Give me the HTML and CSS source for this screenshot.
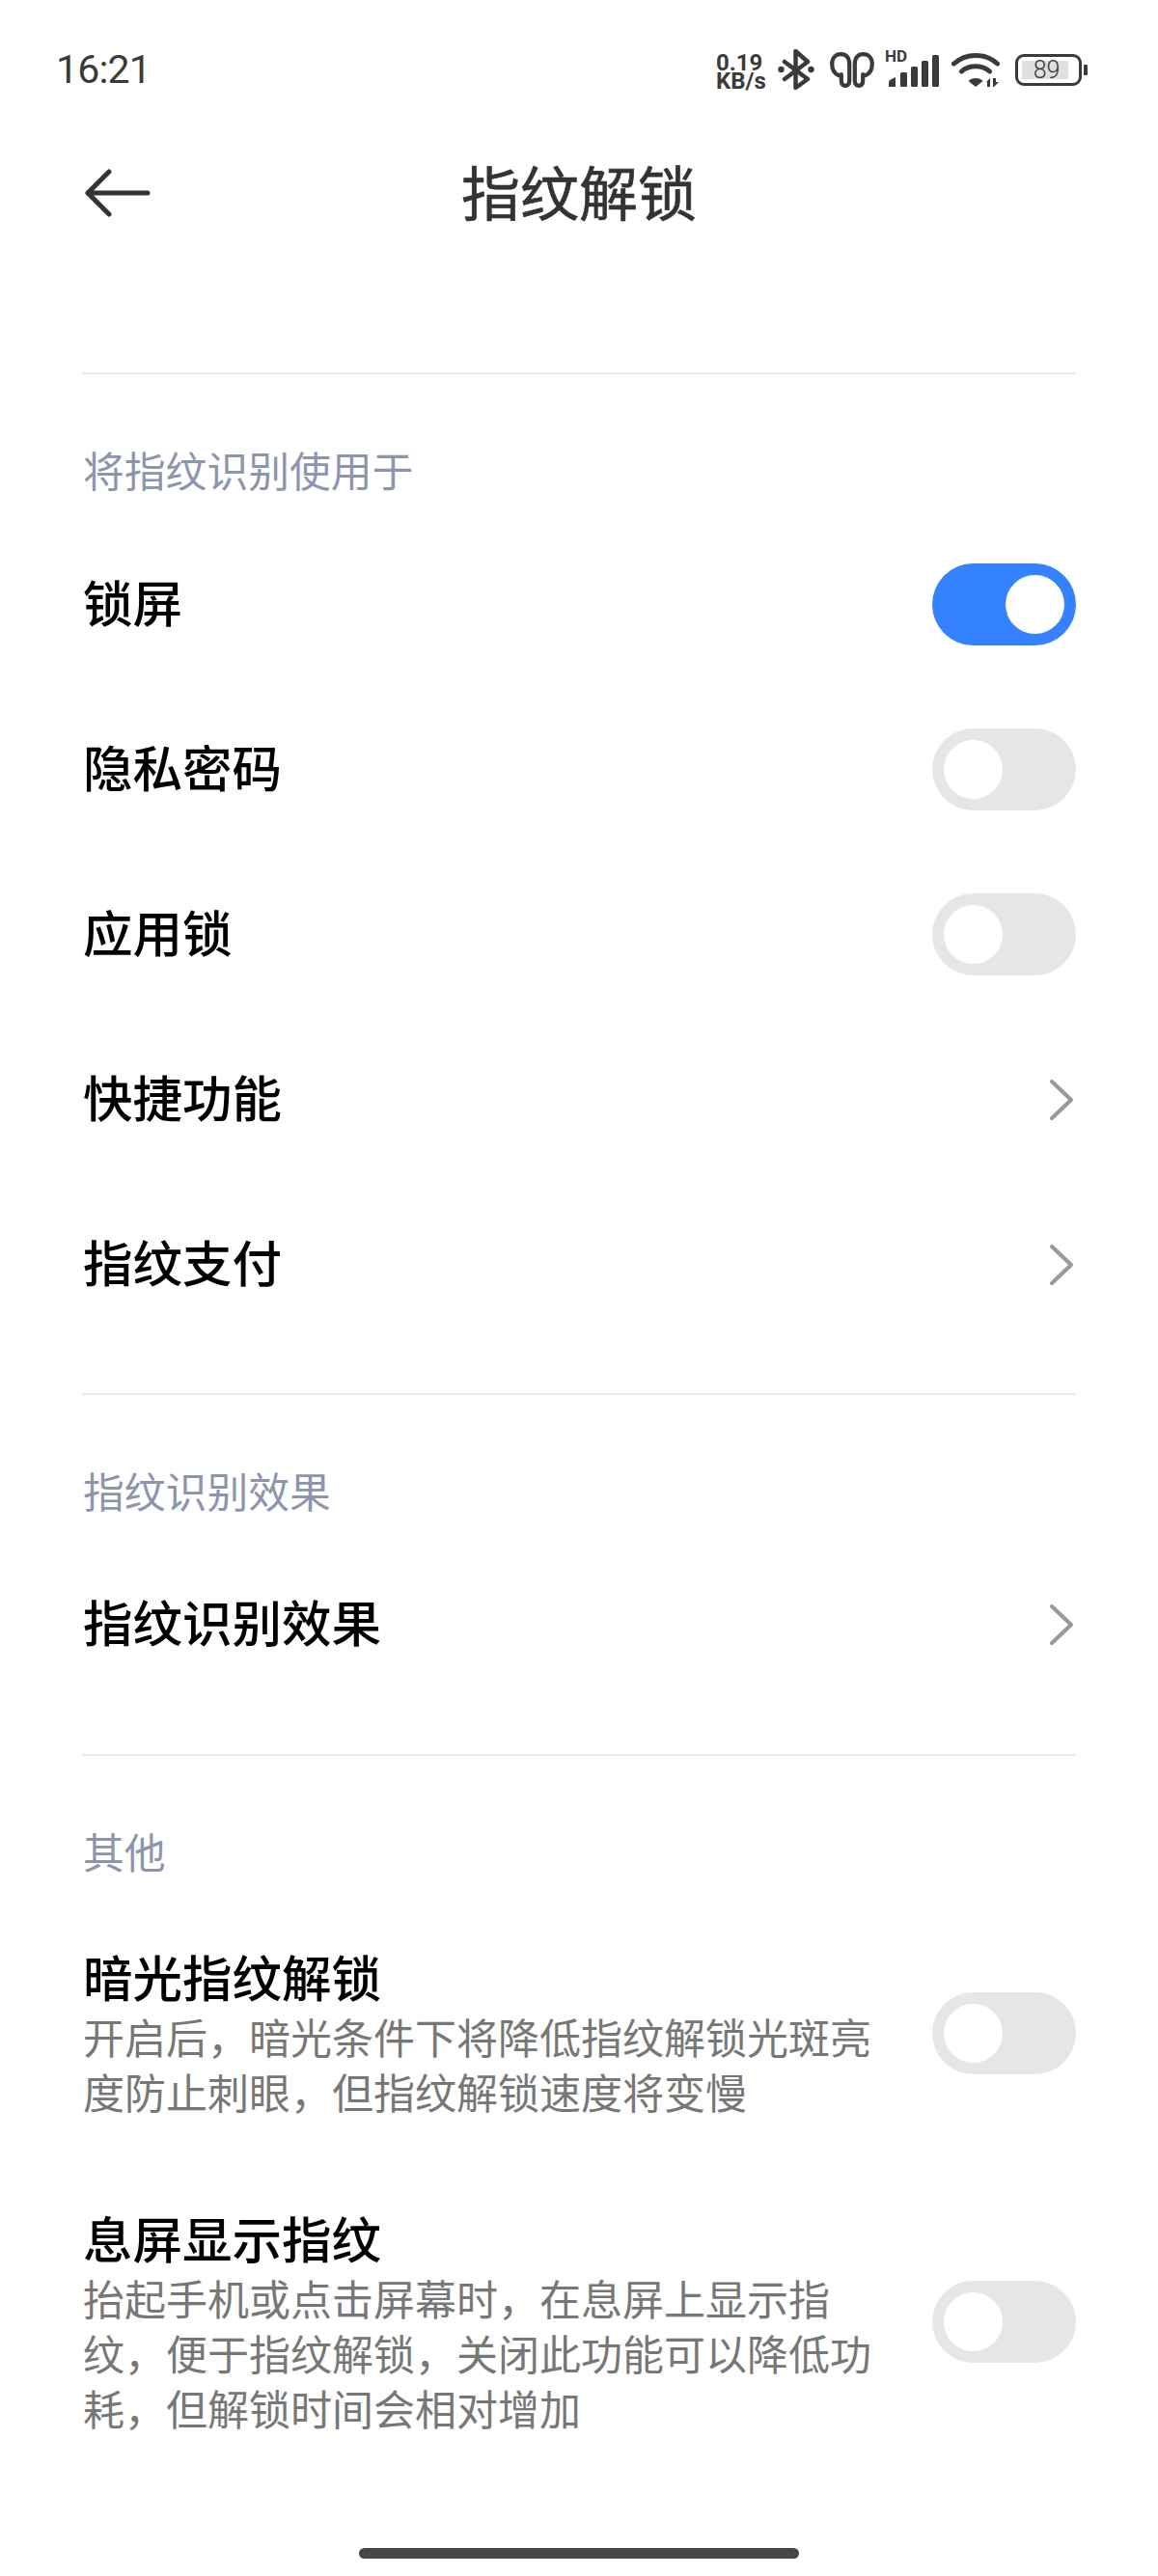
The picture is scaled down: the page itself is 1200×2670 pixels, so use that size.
FILE: index.html
```html
<!DOCTYPE html>
<html lang="zh">
<head>
<meta charset="utf-8">
<title>指纹解锁</title>
<link rel="stylesheet" href="styles.css">
</head>
<body>
<div class="phone">
  <div class="statusbar">
    <span class="clock">16:21</span>
    <div class="status-icons">
      <span class="speed">0.19<br>KB/s</span>
      <svg class="ic-bt" viewBox="0 0 38 42"><path d="M7 13 L31 31 L18.500 40 V2 L31 13 L7 31" fill="none" stroke="#3a3a3a" stroke-width="4.5" stroke-linejoin="round" stroke-linecap="round"/><circle cx="3.500" cy="21" r="3.200" fill="#3a3a3a"/><circle cx="34.500" cy="21" r="3.200" fill="#3a3a3a"/></svg>
      <svg class="ic-buds" viewBox="0 0 46 37"><path d="M9 24 C4.500 22 2.200 18 2.200 12.500 C2.200 6 6 2.200 11.500 2.200 C17 2.200 20.200 6 20.200 12.500 V30 C20.200 33 18.500 34.800 16 34.800 C13.500 34.800 11.800 33 11.800 30 V23" fill="none" stroke="#3a3a3a" stroke-width="4.200" stroke-linecap="round" stroke-linejoin="round"/><path d="M37 24 C41.500 22 43.800 18 43.800 12.500 C43.800 6 40 2.200 34.500 2.200 C29 2.200 25.800 6 25.800 12.500 V30 C25.800 33 27.500 34.800 30 34.800 C32.500 34.800 34.200 33 34.200 30 V23" fill="none" stroke="#3a3a3a" stroke-width="4.200" stroke-linecap="round" stroke-linejoin="round"/></svg>
      <span class="signal">
        <span class="hd">HD</span>
        <svg class="ic-sig" viewBox="0 0 55 34"><path d="M3 34 V29 Q3 27.500 5 26.500 L10 24 V34 Z" fill="#3a3a3a"/><rect x="15" y="19" width="7" height="15" rx="1.500" fill="#3a3a3a"/><rect x="26" y="13" width="7" height="21" rx="1.500" fill="#3a3a3a"/><rect x="37" y="7" width="7" height="27" rx="1.500" fill="#3a3a3a"/><rect x="48" y="1" width="7" height="33" rx="1.500" fill="#3a3a3a"/></svg>
      </span>
      <svg class="ic-wifi" viewBox="0 0 50 37"><path d="M2.500 12 C15 0.500 35 0.500 47.500 12" fill="none" stroke="#3a3a3a" stroke-width="5" stroke-linecap="round"/><path d="M10.500 20 C18 13 32 13 39.500 20" fill="none" stroke="#3a3a3a" stroke-width="5" stroke-linecap="round"/><path d="M17.500 30 C21 26 29 26 32.500 30 L25 36 Z" fill="#3a3a3a"/><path d="M36 31 L40 27 V36 H37 V31 Z M43 27 H46 V31 H49 L44 36 H43 Z" fill="#3a3a3a"/></svg>
      <span class="battery"><span class="battery-body"><span class="battery-fill"></span><span class="battery-num">89</span></span><span class="battery-tip"></span></span>
    </div>
  </div>

  <header class="toolbar">
    <svg class="back" viewBox="0 0 68 50"><path d="M25 3 L3 25 L25 47 M3 25 H65" fill="none" stroke="#333" stroke-width="5" stroke-linecap="round" stroke-linejoin="round"/></svg>
    <h1 class="title">指纹解锁</h1>
  </header>

  <section class="section first">
    <h2 class="section-title">将指纹识别使用于</h2>
    <div class="row"><span class="label">锁屏</span><span class="toggle on"></span></div>
    <div class="row"><span class="label">隐私密码</span><span class="toggle"></span></div>
    <div class="row"><span class="label">应用锁</span><span class="toggle"></span></div>
    <div class="row"><span class="label">快捷功能</span><svg class="chevron" viewBox="0 0 26 44"><path d="M3 3 L23 22 L3 41" fill="none" stroke="#999" stroke-width="4" stroke-linecap="round" stroke-linejoin="round"/></svg></div>
    <div class="row"><span class="label">指纹支付</span><svg class="chevron" viewBox="0 0 26 44"><path d="M3 3 L23 22 L3 41" fill="none" stroke="#999" stroke-width="4" stroke-linecap="round" stroke-linejoin="round"/></svg></div>
  </section>

  <section class="section">
    <h2 class="section-title">指纹识别效果</h2>
    <div class="row"><span class="label">指纹识别效果</span><svg class="chevron" viewBox="0 0 26 44"><path d="M3 3 L23 22 L3 41" fill="none" stroke="#999" stroke-width="4" stroke-linecap="round" stroke-linejoin="round"/></svg></div>
  </section>

  <section class="section last">
    <h2 class="section-title">其他</h2>
    <div class="row tall one">
      <div class="text"><div class="label">暗光指纹解锁</div><p class="desc">开启后，暗光条件下将降低指纹解锁光斑亮度防止刺眼，但指纹解锁速度将变慢</p></div>
      <span class="toggle"></span>
    </div>
    <div class="row tall two">
      <div class="text"><div class="label">息屏显示指纹</div><p class="desc">抬起手机或点击屏幕时，在息屏上显示指纹，便于指纹解锁，关闭此功能可以降低功耗，但解锁时间会相对增加</p></div>
      <span class="toggle"></span>
    </div>
  </section>

  <div class="homebar"></div>
</div>
</body>
</html>
```
FILE: styles.css
```css
* { box-sizing: border-box; }
html, body { margin: 0; padding: 0; background: #fff; }
body { font-family: "Noto Sans CJK SC", "Noto Sans", sans-serif; color: #000; }
.phone { width: 1200px; height: 2670px; position: relative; overflow: hidden; background: #fff; }

.statusbar { height: 144px; padding: 0 73px 0 58px; display: flex; align-items: center; justify-content: space-between; }
.clock { font-family: Roboto, sans-serif; font-size: 41px; color: #3a3a3a; letter-spacing: -0.8px; }
.status-icons { display: flex; align-items: center; }
.speed { display: block; width: 52px; font-family: Roboto, sans-serif; font-weight: 700; font-size: 24px; line-height: 19px; color: #3a3a3a; margin-top: 5px; margin-left: -1px; }
.ic-bt { width: 38px; height: 42px; margin-left: 12px; }
.ic-buds { width: 46px; height: 37px; margin-left: 16px; }
.signal { position: relative; width: 55px; height: 34px; margin-left: 12px; margin-top: 2px; }
.hd { position: absolute; left: -1px; top: -6px; font-family: Roboto, sans-serif; font-weight: 700; font-size: 17px; line-height: 16px; color: #3a3a3a; }
.ic-sig { width: 55px; height: 34px; display: block; }
.ic-wifi { width: 50px; height: 37px; margin-left: 13px; }
.battery { display: flex; align-items: center; margin-left: 16px; }
.battery-body { position: relative; width: 69px; height: 33px; border: 3px solid #3a3a3a; border-radius: 9px; display: flex; align-items: center; justify-content: center; }
.battery-fill { position: absolute; left: 4px; top: 4px; bottom: 4px; width: 48px; background: #e0e0e0; }
.battery-num { position: relative; font-family: Roboto, sans-serif; font-weight: 300; font-size: 25px; line-height: 25px; color: #3a3a3a; margin-left: -4px; }
.battery-tip { width: 4px; height: 11px; background: #3a3a3a; border-radius: 1px; margin-left: 2px; }

.toolbar { position: relative; height: 112px; display: flex; align-items: center; justify-content: center; }
.back { position: absolute; left: 88px; top: 31px; width: 68px; height: 50px; }
.title { margin: 0 0 4px; font-size: 61px; line-height: 108px; font-weight: 400; -webkit-text-stroke: 0.6px #333; color: #333; }

.section { margin: 0 85px; border-top: 2px solid #eaeaea; padding-bottom: 49px; }
.section.first { margin-top: 130px; padding-bottom: 48px; }
.section-title { margin: 0 0 -44px 1px; height: 196px; display: flex; align-items: center; font-size: 42.8px; font-weight: 400; color: #8d94ad; line-height: 1; }
.first .section-title { margin-bottom: -43px; }
.row { height: 171px; display: flex; align-items: center; justify-content: space-between; }
.label { font-size: 51.5px; line-height: 60px; font-weight: 500; color: #000; margin: 0 0 7px 1px; }
.toggle { position: relative; flex: none; width: 149px; height: 85px; border-radius: 43px; background: #e6e6e6; }
.toggle::after { content: ""; position: absolute; top: 12px; left: 12px; width: 61px; height: 61px; border-radius: 50%; background: #fff; }
.toggle.on { background: #3482ff; }
.toggle.on::after { left: 76px; }
.chevron { width: 26px; height: 44px; flex: none; margin-right: 2px; }
.row.tall { height: 270px; }
.row.one { margin-top: -10px; }
.row.two { margin-top: 29px; }
.text { width: 838px; }
.text .label { margin: 0 0 0 1px; }
.desc { margin: 4px 0 0 1px; font-size: 43px; line-height: 57px; color: #777; }

.homebar { position: absolute; left: 372px; top: 2641px; width: 456px; height: 11px; border-radius: 6px; background: #474747; }
```
